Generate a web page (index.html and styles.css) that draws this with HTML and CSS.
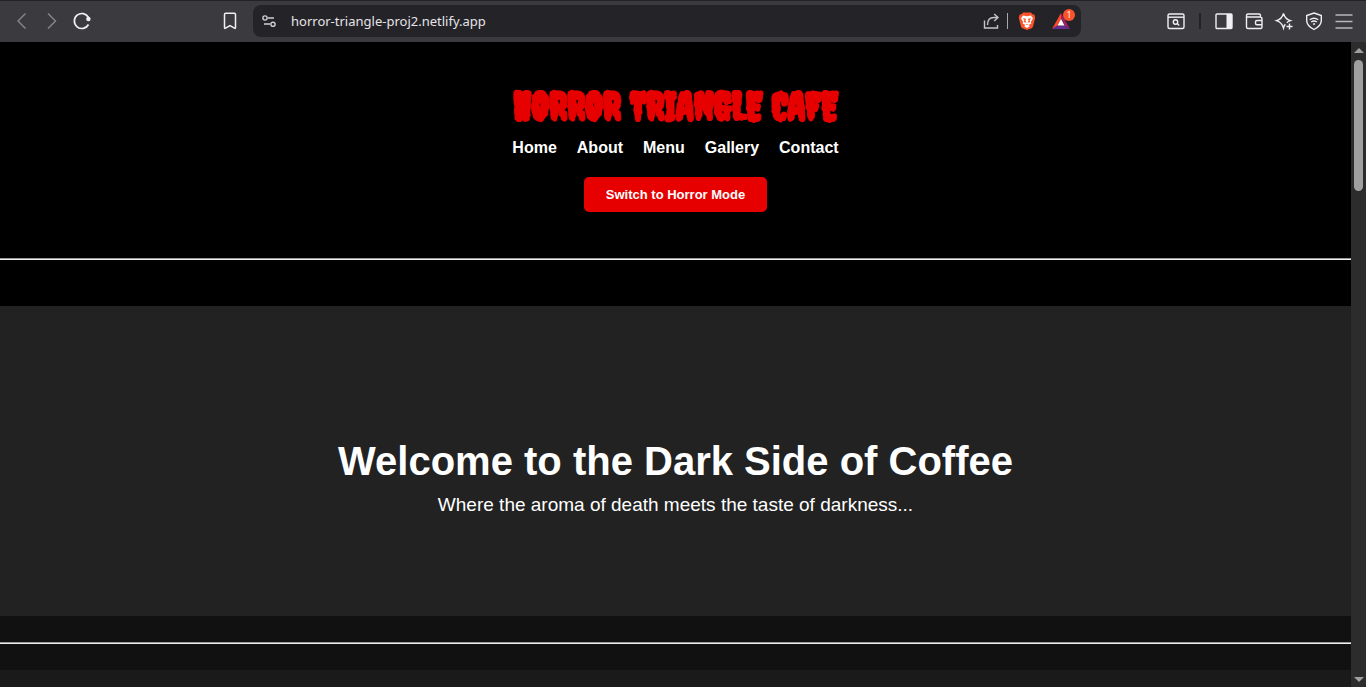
FILE: index.html
```html
<!DOCTYPE html>
<html lang="en">
<head>
<meta charset="utf-8">
<meta name="viewport" content="width=device-width, initial-scale=1">
<title>Horror Triangle Cafe</title>
<link rel="stylesheet" href="styles.css">
</head>
<body>
<div class="browser">
  <div class="toolbar">
    <div class="tools nav-tools">
      <button class="tool dim" aria-label="Back"><svg viewBox="0 0 20 20"><path d="M13.500 2.500 6 10l7.500 7.500"/></svg></button>
      <button class="tool dim" aria-label="Forward"><svg viewBox="0 0 20 20"><path d="m6 2.500 7.500 7.500L6 17.500"/></svg></button>
      <button class="tool" aria-label="Reload"><svg viewBox="0 0 20 20"><path stroke-width="1.700" d="M16.500 13.500A7.500 7.500 0 1 1 16.500 6.500"/><circle class="solid" cx="16.400" cy="8" r="2.200"/></svg></button>
    </div>
    <button class="tool" aria-label="Bookmark"><svg viewBox="0 0 20 20"><path d="M4.500 3.500q0-1.200 1.200-1.200h8.600q1.200 0 1.200 1.200V16.600q0 1.200-1 .6L10 14.500l-4.500 2.700q-1 .6-1-.6z" stroke-width="1.500"/></svg></button>
    <div class="address">
      <button class="tool small" aria-label="Site information"><svg viewBox="0 0 20 20"><circle cx="6" cy="7" r="2.100"/><path d="M9 7h6M5 13h6"/><circle cx="14" cy="13.300" r="2.100"/></svg></button>
      <input class="url" aria-label="Address" value="horror-triangle-proj2.netlify.app" spellcheck="false">
      <button class="tool soft" aria-label="Share"><svg viewBox="0 0 20 20"><path d="M3.500 9.500v7.500h13v-3M6.500 14Q6.500 6.500 13 6.500h4M13.200 3l3.800 3.500-3.800 3.500"/></svg></button>
      <span class="rule light"></span>
      <button class="tool shield" aria-label="Brave Shields"><svg viewBox="0 0 20 20"><path fill="#fb542b" stroke="none" d="m6 1.500h8l1.500 1.700 1.800.3.900 3-.6 2.800-1.500 6q-.4 1.300-1.500 2L10 19l-4.600-1.700q-1.100-.7-1.500-2l-1.500-6-.6-2.800.9-3 1.800-.3z"/><path fill="#fff" stroke="none" d="m6 4.500 4 .7 4-.7 2 3-2.200 3.500.5 1.500L11.600 14l1.200 1.200L10 17l-2.800-1.800L8.400 14l-2.700-1.500.5-1.500L4 7.500z"/><path fill="#fb542b" stroke="none" d="m6 7.300 3 .5-.6 1.700 1 2.300-2.600-.9.600-1.500zM14 7.300l-3 .5.600 1.700-1 2.300 2.600-.9-.6-1.500zM8.700 13h2.600L10 14z"/></svg></button>
      <button class="tool rewards" aria-label="Rewards, 1 new"><svg viewBox="0 0 20 20"><path fill="#ff4724" stroke="none" d="M10 2 1 18 6.500 14.500 10 8z"/><path fill="#9e1f63" stroke="none" d="m10 2 9 16-5.500-3.500L10 8z"/><path fill="#662d91" stroke="none" d="m1 18 5.500-3.500h7L19 18z"/><path fill="#fff" stroke="none" d="m10 8 3.500 6.500h-7z"/></svg><span class="badge">1</span></button>
    </div>
    <div class="tools right-tools">
      <button class="tool" aria-label="Search tabs"><svg viewBox="0 0 20 20"><rect x="2" y="3" width="16" height="14.500" rx="1.500"/><path d="M2 6.200h16"/><circle cx="9.500" cy="11" r="2.200"/><path d="m11.200 12.600 2 2"/></svg></button>
      <span class="rule dark"></span>
      <button class="tool" aria-label="Sidebar"><svg viewBox="0 0 20 20"><rect x="2" y="3" width="16" height="14.500" rx="1"/><path class="solid" d="M12.500 3H18v14.500h-5.500z"/></svg></button>
      <button class="tool" aria-label="Wallet"><svg viewBox="0 0 20 20"><path d="M2.500 6V4.500q0-1.500 1.500-1.500h11q1.500 0 1.500 1.500V6M2.500 6H16q2 0 2 2v8q0 1.500-1.500 1.500H4q-1.500 0-1.500-1.500zM18 9.500h-5q-1.500 0-1.500 1.500v1.300q0 1.500 1.500 1.500h5"/></svg></button>
      <button class="tool" aria-label="Assistant"><svg viewBox="0 0 20 20"><path d="M9.500 2.500Q11 8 16.500 9.700 14 10.500 12.800 11.700M9.500 2.500Q8 8 2.500 9.700 8 11.500 9.500 17q.6-2.300 1.800-3.700M15.500 12.500v6M12.500 15.500h6"/></svg></button>
      <button class="tool" aria-label="VPN"><svg viewBox="0 0 20 20"><path d="m10 2 7.300 2.500v5q0 5.300-7.300 9-7.300-3.700-7.300-9v-5z"/><path d="M5.800 8.700q4.200-3 8.400 0M7.200 11q2.800-2 5.600 0"/><circle class="solid" cx="10" cy="13" r="1"/></svg></button>
      <button class="tool menu-tool" aria-label="Menu"><svg viewBox="0 0 20 20"><path d="M1.500 4h17M1.500 10.500h17M1.500 17h17"/></svg></button>
    </div>
  </div>

  <div class="viewport">
    <div class="page">
      <header class="site-header">
        <h1 class="brand">HORROR TRIANGLE CAFE</h1>
        <nav class="site-nav" aria-label="Main">
          <a href="#home">Home</a>
          <a href="#about">About</a>
          <a href="#menu">Menu</a>
          <a href="#gallery">Gallery</a>
          <a href="#contact">Contact</a>
        </nav>
        <button class="mode-button">Switch to Horror Mode</button>
      </header>
      <div class="band black"><hr class="divider"></div>
      <section class="hero" id="home">
        <h2 class="hero-title">Welcome to the Dark Side of Coffee</h2>
        <p class="hero-text">Where the aroma of death meets the taste of darkness...</p>
      </section>
      <div class="band charcoal"><hr class="divider"></div>
      <section class="about" id="about"></section>
    </div>
    <div class="scrollbar" aria-hidden="true">
      <span class="arrow up"></span>
      <span class="track"><span class="thumb"></span></span>
      <span class="arrow down"></span>
    </div>
  </div>
</div>
</body>
</html>
```
FILE: styles.css
```css
* { box-sizing: border-box; }

body {
  margin: 0;
  background: #111;
  color: #fff;
  font-family: "Liberation Sans", Arial, sans-serif;
}

button {
  border: 0;
  font-family: inherit;
  cursor: pointer;
}

.browser {
  display: flex;
  flex-direction: column;
  height: 100vh;
  overflow: hidden;
}

/* Browser toolbar */
.toolbar {
  display: flex;
  flex: none;
  align-items: center;
  height: 42px;
  padding: 0 12px 1px;
  background: #3b3a3f;
  border-top: 1px solid #232227;
}

.tools {
  display: flex;
  align-items: center;
  gap: 10px;
}

.nav-tools { flex: 0 0 208px; }

.tool {
  position: relative;
  display: block;
  flex: none;
  width: 20px;
  height: 20px;
  padding: 0;
  background: none;
  color: #f0f0f2;
}

.tool svg {
  display: block;
  width: 100%;
  height: 100%;
  fill: none;
  stroke: currentColor;
  stroke-width: 1.4;
  overflow: visible;
}

.tool .solid { fill: currentColor; stroke: none; }
.dim { color: #88878c; }
.soft { color: #c4c4c8; }
.small { color: #d0d0d4; }
.menu-tool { color: #b8b8bc; }

.address {
  display: flex;
  flex: 0 1 828px;
  align-items: center;
  height: 32px;
  margin-left: 13px;
  padding: 0 10px 0 6px;
  border-radius: 8px;
  background: #242328;
}

.url {
  flex: 1;
  min-width: 0;
  height: 24px;
  margin-left: 12px;
  padding: 0;
  border: 0;
  outline: 0;
  background: none;
  color: #e4e4e8;
  font: 13px/24px "Noto Sans", "Open Sans", sans-serif;
}

.rule { flex: none; height: 16px; }
.rule.light { width: 1px; margin: 0 9px 0 6px; background: #a9a9ad; }
.rule.dark { width: 2px; margin: 0 3px; background: #242328; }
.shield { margin-right: 14px; }

.badge {
  position: absolute;
  top: -2px;
  right: -4px;
  width: 12px;
  height: 12px;
  border-radius: 6px;
  background: #fb542b;
  color: #fff;
  font: 9px/12px "Open Sans", sans-serif;
  text-align: center;
}

.right-tools { margin-left: auto; }

/* Web page */
.viewport {
  display: flex;
  flex: 1;
  min-height: 0;
}

.page {
  flex: 1;
  min-width: 0;
  overflow: hidden;
}

.site-header {
  display: flex;
  flex-direction: column;
  align-items: center;
  padding: 40px 20px;
  background: #000;
}

.brand {
  margin: 0;
  color: #e60000;
  font: bold 39px/48px Creepster, "DejaVu Sans Condensed", sans-serif;
  -webkit-text-stroke: 1px #e60000;
  white-space: nowrap;
}

.site-nav {
  display: flex;
  gap: 20px;
  margin: 8px 0 20px;
  font-size: 16px;
  font-weight: bold;
  line-height: 19px;
}

.site-nav a { color: #fff; text-decoration: none; }

.mode-button {
  padding: 10px 22px;
  border-radius: 5px;
  background: #e60000;
  color: #fff;
  font-size: 13px;
  font-weight: bold;
  line-height: 15px;
}

.band { display: flow-root; }
.black { background: #000; padding: 6px 0 46px; }
.charcoal { background: #111; padding: 26px 0; }

.divider {
  height: 2px;
  margin: 0;
  border: 0;
  border-top: 1px solid #9a9a9a;
  border-bottom: 1px solid #eee;
}

.hero {
  display: flex;
  flex-direction: column;
  align-items: center;
  padding: 130px 20px 98px;
  background: #222;
  text-align: center;
}

.hero-title {
  margin: 0 0 6px;
  font-size: 40px;
  line-height: 50px;
}

.hero-text {
  margin: 0;
  font-size: 19px;
  line-height: 26px;
}

.about { min-height: 200px; background: #1a1a1a; }

/* Page scrollbar */
.scrollbar {
  display: flex;
  flex: 0 0 15px;
  flex-direction: column;
  align-items: center;
  padding: 6px 0 5px;
  background: #2c2c2c;
}

.arrow {
  border: 5px solid transparent;
  border-top-width: 0;
  border-bottom-width: 0;
}

.up { border-bottom: 5px solid #a0a0a0; }
.down { border-top: 5px solid #a0a0a0; }

.track { flex: 1; padding: 7px 0; }

.thumb {
  display: block;
  width: 9px;
  height: 131px;
  border-radius: 5px;
  background: #a0a0a0;
}
```
